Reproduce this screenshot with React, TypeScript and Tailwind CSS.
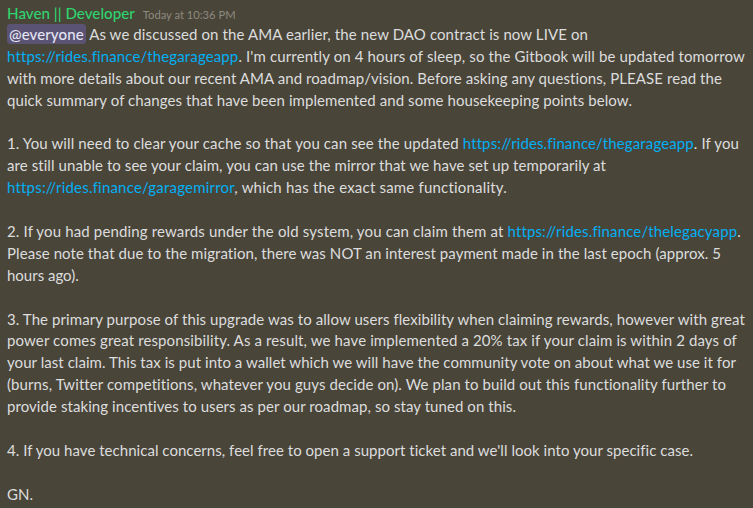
import { useLayoutEffect, useRef, useState, type ReactNode } from "react";

const LEFT = 7;

function A({ children }: { children: string }) {
  return <span className="text-[#00aff4]">{children}</span>;
}

// right edge of each line in the screenshot, used to stretch the text so the wraps line up
type Line = { right?: number; content: ReactNode } | null;

const lines: Line[] = [
  {
    right: 588,
    content: (
      <>
        <span className="rounded-[3px] bg-[#5b5373] px-[2px] py-[1px] font-medium text-[#e3e4f5]">@everyone</span> As we discussed on the AMA earlier, the new DAO contract is now LIVE on
      </>
    ),
  },
  {
    right: 745,
    content: (
      <>
        <A>https://rides.finance/thegarageapp</A>. I'm currently on 4 hours of sleep, so the Gitbook will be updated tomorrow
      </>
    ),
  },
  { right: 722, content: "with more details about our recent AMA and roadmap/vision. Before asking any questions, PLEASE read the" },
  { right: 632, content: "quick summary of changes that have been implemented and some housekeeping points below." },
  null,
  {
    right: 739,
    content: (
      <>
        1. You will need to clear your cache so that you can see the updated <A>https://rides.finance/thegarageapp</A>. If you
      </>
    ),
  },
  { right: 606, content: "are still unable to see your claim, you can use the mirror that we have set up temporarily at" },
  {
    right: 507,
    content: (
      <>
        <A>https://rides.finance/garagemirror</A>, which has the exact same functionality.
      </>
    ),
  },
  null,
  {
    right: 741,
    content: (
      <>
        2. If you had pending rewards under the old system, you can claim them at <A>https://rides.finance/thelegacyapp</A>.
      </>
    ),
  },
  { right: 721, content: "Please note that due to the migration, there was NOT an interest payment made in the last epoch (approx. 5" },
  { content: "hours ago)." },
  null,
  { right: 745, content: "3. The primary purpose of this upgrade was to allow users flexibility when claiming rewards, however with great" },
  { right: 737, content: "power comes great responsibility. As a result, we have implemented a 20% tax if your claim is within 2 days of" },
  { right: 736, content: "your last claim. This tax is put into a wallet which we will have the community vote on about what we use it for" },
  { right: 726, content: "(burns, Twitter competitions, whatever you guys decide on). We plan to build out this functionality further to" },
  { right: 516, content: "provide staking incentives to users as per our roadmap, so stay tuned on this." },
  null,
  { right: 693, content: "4. If you have technical concerns, feel free to open a support ticket and we'll look into your specific case." },
  null,
  { content: "GN." },
];

function FitLine({ right, children }: { right?: number; children: ReactNode }) {
  const ref = useRef<HTMLSpanElement>(null);
  const [ls, setLs] = useState(0);

  useLayoutEffect(() => {
    const el = ref.current;
    if (!el || right === undefined) return;
    const fit = () => {
      const n = (el.textContent ?? "").length;
      const cur = parseFloat(el.style.letterSpacing || "0") || 0;
      const natural = el.getBoundingClientRect().width - cur * n;
      setLs((right - LEFT - natural) / n);
    };
    fit();
    document.fonts?.ready.then(fit);
  }, [right]);

  return (
    <div className="h-[21.9px] whitespace-nowrap">
      <span ref={ref} style={right === undefined ? undefined : { letterSpacing: `${ls}px` }}>
        {children}
      </span>
    </div>
  );
}

export default function App() {
  return (
    <div className="h-[508px] w-[753px] overflow-hidden bg-[#4a4539] pl-[7px] pt-[2px] font-['Lato','Noto_Sans',sans-serif] text-[#dcddde]">
      <div className="flex h-[22px] items-baseline gap-[8px]">
        <span className="text-[15.2px] font-medium text-[#2ed46e]">Haven || Developer</span>
        <span className="text-[11.2px] text-[#8d8a80]">Today at 10:36 PM</span>
      </div>
      <div className="text-[15px] leading-[21.9px]">
        {lines.map((l, i) =>
          l ? (
            <FitLine key={i} right={l.right}>
              {l.content}
            </FitLine>
          ) : (
            <div key={i} className="h-[21.9px]" />
          ),
        )}
      </div>
    </div>
  );
}
